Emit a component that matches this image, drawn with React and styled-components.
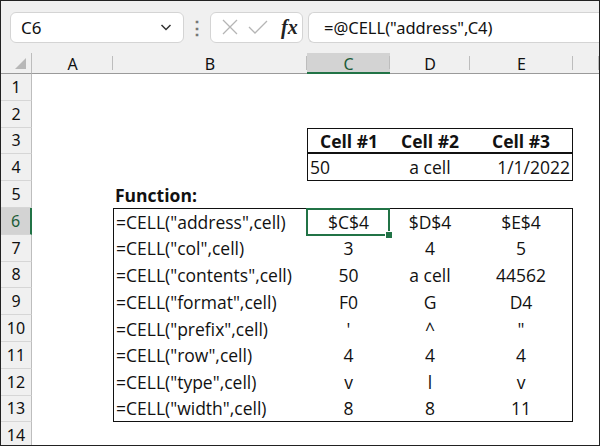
import React from 'react'
import styled, { createGlobalStyle } from 'styled-components'

const GlobalStyle = createGlobalStyle`
  html, body { margin: 0; padding: 0; background: #ffffff; }
`

const GREEN = '#217346'
const UI_FONT = `"Noto Sans", "Open Sans", sans-serif`
const CELL_FONT = `"Open Sans", Lato, sans-serif`

const Frame = styled.div`
  width: 600px;
  height: 446px;
  box-sizing: border-box;
  border: 1px solid #222;
  background: #ffffff;
  overflow: hidden;
  display: flex;
  flex-direction: column;
`

const Toolbar = styled.div`
  height: 52px;
  flex: none;
  background: #f0f0f0;
  display: flex;
  align-items: center;
  padding-left: 9px;
`

const Box = styled.div`
  height: 31px;
  box-sizing: border-box;
  background: #ffffff;
  border: 1px solid #d4d4d4;
  border-radius: 6px;
  display: flex;
  align-items: center;
`

const NameBox = styled(Box)`
  width: 174px;
  padding: 0 10px 0 10px;
  justify-content: space-between;
  font-family: ${UI_FONT};
  font-size: 17px;
  color: #111;
`

const Dots = styled.div`
  width: 26px;
  display: flex;
  justify-content: center;
  color: #777;
  font-size: 18px;
  font-family: ${UI_FONT};
  font-weight: bold;
`

const IconBox = styled(Box)`
  width: 93px;
  padding-left: 10px;
  gap: 8px;
`

const Fx = styled.span`
  font-family: "Liberation Serif", serif;
  font-style: italic;
  font-weight: bold;
  font-size: 20px;
  color: #222;
  margin-left: 4px;
`

const FormulaBox = styled(Box)`
  flex: 1;
  margin-left: 5px;
  border-right: none;
  border-radius: 6px 0 0 6px;
  padding-left: 15px;
  font-family: ${UI_FONT};
  font-size: 16.5px;
  color: #111;
`

const Sheet = styled.div`
  flex: 1;
  display: grid;
  grid-template-columns: 31px 81px 194px 83px 80px 103px 1fr;
  grid-template-rows: 21px repeat(14, 26.8px);
`

const Corner = styled.div`
  background: #f0f0f0;
  border-right: 1px solid #bdbdbd;
  border-bottom: 1px solid #9a9a9a;
  position: relative;
`

const CornerTri = styled.div`
  position: absolute;
  right: 5px;
  bottom: 4px;
  width: 0;
  height: 0;
  border-left: 11px solid transparent;
  border-bottom: 11px solid #b8b8b8;
`

const ColHead = styled.div`
  background: ${p => (p.$active ? '#d3d3d3' : '#f0f0f0')};
  border-bottom: ${p => (p.$active ? `2px solid ${GREEN}` : '1px solid #9a9a9a')};
  box-sizing: border-box;
  display: flex;
  align-items: center;
  justify-content: center;
  padding-top: 2px;
  font-family: ${UI_FONT};
  font-size: 16px;
  color: ${p => (p.$active ? '#1c5c38' : '#111')};
  position: relative;
  &::after {
    content: '';
    position: absolute;
    right: 0;
    top: 3px;
    bottom: 3px;
    width: 1px;
    background: #bdbdbd;
  }
`

const RowHead = styled.div`
  background: ${p => (p.$active ? '#d3d3d3' : '#f0f0f0')};
  border-right: ${p => (p.$active ? `2px solid ${GREEN}` : '1px solid #bdbdbd')};
  border-bottom: 1px solid #d6d6d6;
  box-sizing: border-box;
  display: flex;
  align-items: center;
  justify-content: center;
  font-family: ${UI_FONT};
  font-size: 16px;
  color: ${p => (p.$active ? '#1c5c38' : '#111')};
`

const line = '1.5px solid #111'

const Cell = styled.div`
  box-sizing: border-box;
  display: flex;
  align-items: center;
  justify-content: ${p => ({ left: 'flex-start', right: 'flex-end', center: 'center' }[p.$align || 'left'])};
  padding: 0 2px;
  font-family: ${CELL_FONT};
  font-size: 17.5px;
  font-weight: ${p => (p.$bold ? 700 : 400)};
  color: #111;
  white-space: nowrap;
  border-top: ${p => (p.$t ? line : 'none')};
  border-bottom: ${p => (p.$b ? (p.$b === 2 ? '2px solid #111' : line) : 'none')};
  border-left: ${p => (p.$l ? line : 'none')};
  border-right: ${p => (p.$r ? line : 'none')};
  position: relative;
`

const Selection = styled.div`
  position: absolute;
  inset: -1px 0 -1px -1px;
  border: 2px solid ${GREEN};
  pointer-events: none;
  &::after {
    content: '';
    position: absolute;
    right: -5px;
    bottom: -5px;
    width: 6px;
    height: 6px;
    background: ${GREEN};
    border: 1px solid #fff;
  }
`

const cols = ['A', 'B', 'C', 'D', 'E', '']

const functions = [
  ['=CELL("address",cell)', '$C$4', '$D$4', '$E$4'],
  ['=CELL("col",cell)', '3', '4', '5'],
  ['=CELL("contents",cell)', '50', 'a cell', '44562'],
  ['=CELL("format",cell)', 'F0', 'G', 'D4'],
  ['=CELL("prefix",cell)', "'", '^', '"'],
  ['=CELL("row",cell)', '4', '4', '4'],
  ['=CELL("type",cell)', 'v', 'l', 'v'],
  ['=CELL("width",cell)', '8', '8', '11'],
]

const Chevron = () => (
  <svg width="14" height="14" viewBox="0 0 14 14">
    <path d="M2.5 5 L7 9.5 L11.5 5" fill="none" stroke="#333" strokeWidth="1.5" />
  </svg>
)

const Cross = () => (
  <svg width="18" height="18" viewBox="0 0 18 18">
    <path d="M2 2 L16 16 M16 2 L2 16" stroke="#b5b5b5" strokeWidth="1.3" />
  </svg>
)

const Check = () => (
  <svg width="22" height="18" viewBox="0 0 22 18">
    <path d="M2 9 L8 15 L20 3" fill="none" stroke="#b5b5b5" strokeWidth="1.3" />
  </svg>
)

const Empty = () => <Cell />

const renderRow = r => {
  const cells = []
  if (r === 3) {
    cells.push(<Empty key="a" />, <Empty key="b" />)
    cells.push(<Cell key="c" $bold $align="center" $t $l $b={2}>Cell #1</Cell>)
    cells.push(<Cell key="d" $bold $align="center" $t $b={2}>Cell #2</Cell>)
    cells.push(<Cell key="e" $bold $align="center" $t $r $b={2}>Cell #3</Cell>)
  } else if (r === 4) {
    cells.push(<Empty key="a" />, <Empty key="b" />)
    cells.push(<Cell key="c" $l $b>50</Cell>)
    cells.push(<Cell key="d" $align="center" $b>a cell</Cell>)
    cells.push(<Cell key="e" $align="right" $r $b>1/1/2022</Cell>)
  } else if (r === 5) {
    cells.push(<Empty key="a" />)
    cells.push(<Cell key="b" $bold>Function:</Cell>)
    cells.push(<Empty key="c" />, <Empty key="d" />, <Empty key="e" />)
  } else if (r >= 6 && r <= 13) {
    const [fn, c, d, e] = functions[r - 6]
    const t = r === 6
    const b = r === 13
    cells.push(<Empty key="a" />)
    cells.push(<Cell key="b" $l $t={t} $b={b}>{fn}</Cell>)
    cells.push(
      <Cell key="c" $align="center" $t={t} $b={b}>
        {c}
        {r === 6 && <Selection />}
      </Cell>
    )
    cells.push(<Cell key="d" $align="center" $t={t} $b={b}>{d}</Cell>)
    cells.push(<Cell key="e" $align="center" $r $t={t} $b={b}>{e}</Cell>)
  } else {
    cells.push(<Empty key="a" />, <Empty key="b" />, <Empty key="c" />, <Empty key="d" />, <Empty key="e" />)
  }
  cells.push(<Empty key="f" />)
  return cells
}

export default function App() {
  const rows = Array.from({ length: 14 }, (_, i) => i + 1)
  return (
    <>
      <GlobalStyle />
      <Frame>
        <Toolbar>
          <NameBox>
            <span>C6</span>
            <Chevron />
          </NameBox>
          <Dots>⋮</Dots>
          <IconBox>
            <Cross />
            <Check />
            <Fx>fx</Fx>
          </IconBox>
          <FormulaBox>=@CELL("address",C4)</FormulaBox>
        </Toolbar>
        <Sheet>
          <Corner>
            <CornerTri />
          </Corner>
          {cols.map(c => (
            <ColHead key={c || 'F'} $active={c === 'C'}>
              {c}
            </ColHead>
          ))}
          {rows.map(r => (
            <React.Fragment key={r}>
              <RowHead $active={r === 6}>{r}</RowHead>
              {renderRow(r)}
            </React.Fragment>
          ))}
        </Sheet>
      </Frame>
    </>
  )
}
